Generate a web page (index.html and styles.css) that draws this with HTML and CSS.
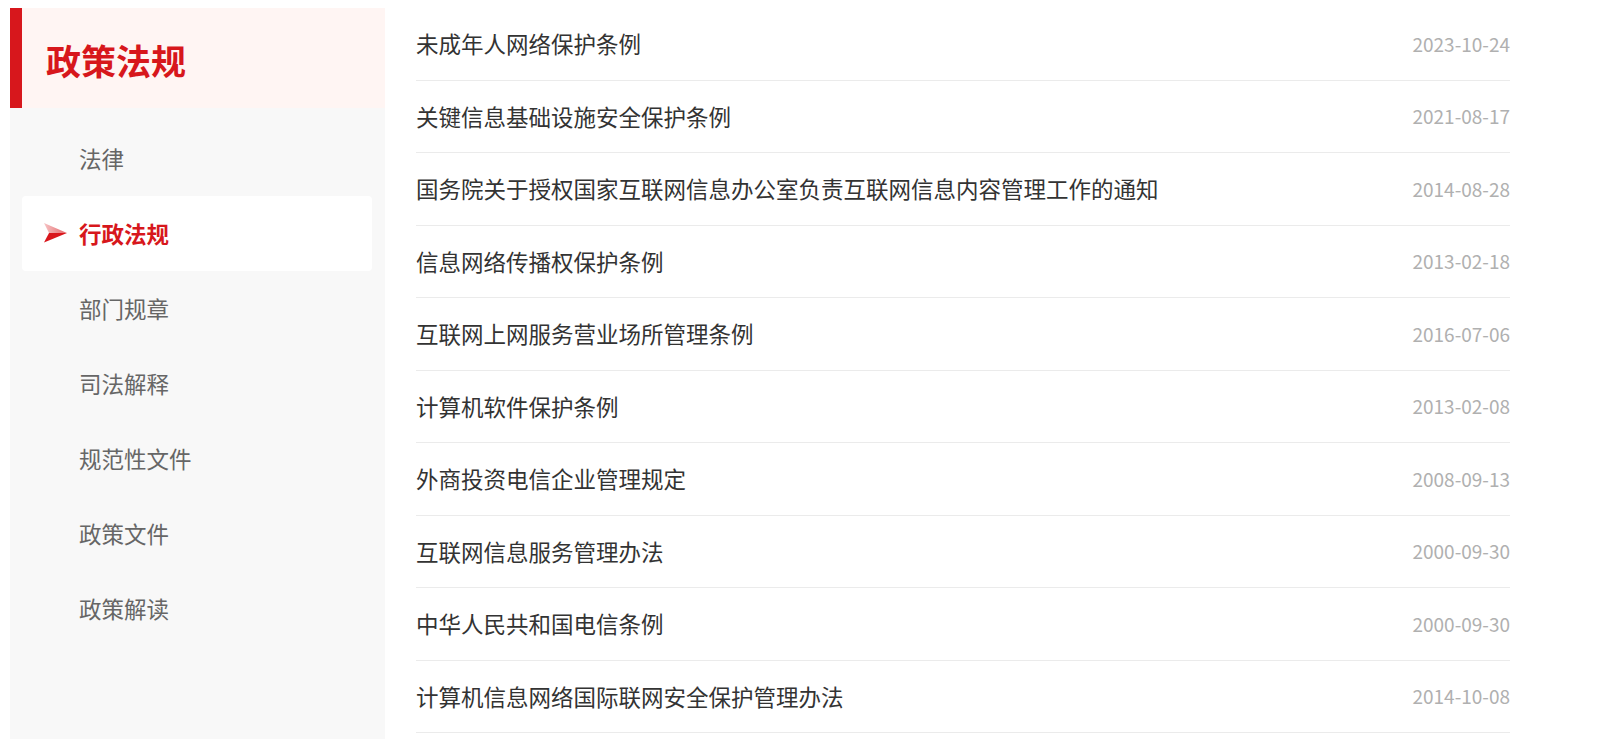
FILE: index.html
```html
<!DOCTYPE html>
<html lang="zh-CN">
<head>
<meta charset="utf-8">
<title>政策法规</title>
<link rel="stylesheet" href="styles.css">
</head>
<body>
<div class="page">
  <aside class="sidebar">
    <div class="side-head"><h2 class="side-title">政策法规</h2></div>
    <ul class="menu">
      <li class="menu-item">法律</li>
      <li class="menu-item active">
        <svg class="arrow" width="23" height="20" viewBox="0 0 23 20">
          <defs>
            <linearGradient id="up" x1="0" y1="0" x2="1" y2="0">
              <stop offset="0" stop-color="#f6c4c5"/>
              <stop offset="1" stop-color="#e46467"/>
            </linearGradient>
          </defs>
          <polygon points="0,0 23,10 5,10" fill="url(#up)"/>
          <polygon points="5,10 23,10 0,19.5" fill="#d9161c"/>
        </svg>
        <span>行政法规</span>
      </li>
      <li class="menu-item">部门规章</li>
      <li class="menu-item">司法解释</li>
      <li class="menu-item">规范性文件</li>
      <li class="menu-item">政策文件</li>
      <li class="menu-item">政策解读</li>
    </ul>
  </aside>
  <main class="list">
    <div class="row"><span class="title">未成年人网络保护条例</span><span class="date">2023-10-24</span></div>
    <div class="row"><span class="title">关键信息基础设施安全保护条例</span><span class="date">2021-08-17</span></div>
    <div class="row"><span class="title">国务院关于授权国家互联网信息办公室负责互联网信息内容管理工作的通知</span><span class="date">2014-08-28</span></div>
    <div class="row"><span class="title">信息网络传播权保护条例</span><span class="date">2013-02-18</span></div>
    <div class="row"><span class="title">互联网上网服务营业场所管理条例</span><span class="date">2016-07-06</span></div>
    <div class="row"><span class="title">计算机软件保护条例</span><span class="date">2013-02-08</span></div>
    <div class="row"><span class="title">外商投资电信企业管理规定</span><span class="date">2008-09-13</span></div>
    <div class="row"><span class="title">互联网信息服务管理办法</span><span class="date">2000-09-30</span></div>
    <div class="row"><span class="title">中华人民共和国电信条例</span><span class="date">2000-09-30</span></div>
    <div class="row"><span class="title">计算机信息网络国际联网安全保护管理办法</span><span class="date">2014-10-08</span></div>
  </main>
</div>
</body>
</html>
```
FILE: styles.css
```css
* { box-sizing: border-box; }
html, body { margin: 0; padding: 0; background: #fff; }
body {
  font-family: "Microsoft YaHei", "Noto Sans CJK SC", "Noto Sans", sans-serif;
  overflow: hidden;
}
.page {
  display: flex;
  align-items: flex-start;
  padding: 8px 0 0 10px;
  gap: 31px;
}
.sidebar {
  width: 375px;
  flex: 0 0 375px;
  min-height: 760px;
  background: #f8f8f8;
}
.side-head {
  height: 100px;
  background: #fff5f3;
  border-left: 12px solid #d7171c;
  display: flex;
  align-items: center;
  padding-left: 24px;
}
.side-title {
  margin: 0;
  font-size: 35px;
  font-weight: bold;
  color: #d7171c;
  line-height: 1;
  padding-top: 2px;
}
.menu {
  list-style: none;
  margin: 0;
  padding: 13px 0 0 0;
}
.menu-item {
  height: 75px;
  line-height: 75px;
  margin: 0 13px 0 12px;
  padding-left: 57px;
  font-size: 22.5px;
  color: #666;
  position: relative;
}
.menu-item.active {
  background: #fff;
  border-radius: 4px;
  color: #d7171c;
  font-weight: bold;
}
.arrow {
  position: absolute;
  left: 22px;
  top: 27px;
}
.list {
  width: 1094px;
  flex: 0 0 1094px;
}
.row {
  height: 72.5px;
  border-bottom: 1px solid #ebebeb;
  display: flex;
  align-items: center;
  justify-content: space-between;
  padding-bottom: 1px;
}
.title {
  font-size: 22.5px;
  color: #333;
}
.date {
  font-size: 19px;
  color: #b0b0b0;
}
```
